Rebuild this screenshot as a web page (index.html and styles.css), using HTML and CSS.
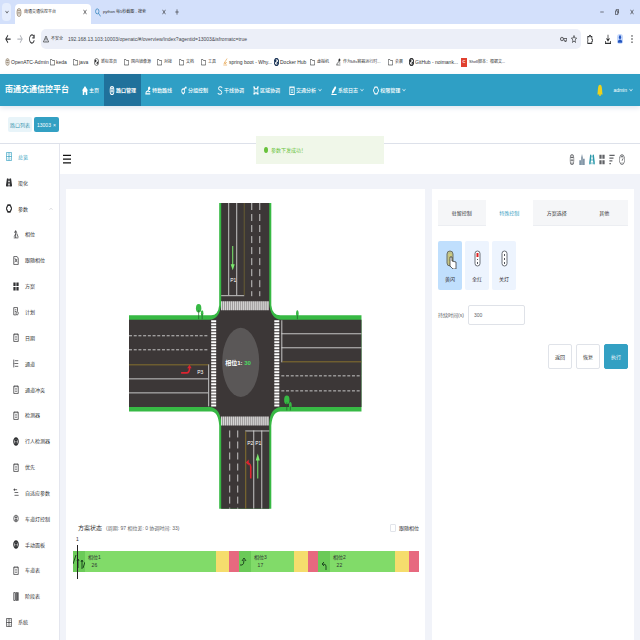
FILE: index.html
```html
<!DOCTYPE html>
<html lang="zh-CN">
<head>
<meta charset="utf-8">
<title>南通交通信控平台</title>
<link rel="stylesheet" href="styles.css">
</head>
<body>
<svg class="defs" aria-hidden="true">
  <symbol id="chev" viewBox="0 0 16 16" preserveAspectRatio="none"><path d="M2 5l6 6 6-6"/></symbol>
  <symbol id="close" viewBox="0 0 16 16" preserveAspectRatio="none"><path d="M2 2l12 12M14 2L2 14"/></symbol>
  <symbol id="plus" viewBox="0 0 16 16" preserveAspectRatio="none"><path d="M8 1v14M1 8h14"/></symbol>
  <symbol id="min" viewBox="0 0 16 16" preserveAspectRatio="none"><path d="M1 8h14"/></symbol>
  <symbol id="restore" viewBox="0 0 16 16" preserveAspectRatio="none"><path d="M2 5h9v10H2zM5 5V1h9v10h-3"/></symbol>
  <symbol id="search" viewBox="0 0 16 16" preserveAspectRatio="none"><circle cx="6" cy="6" r="4.5"/><path d="M9 9l6 6"/></symbol>
  <symbol id="back" viewBox="0 0 16 16" preserveAspectRatio="none"><path d="M15 8H2M8 2L2 8l6 6"/></symbol>
  <symbol id="fwd" viewBox="0 0 16 16" preserveAspectRatio="none"><path d="M1 8h13M8 2l6 6-6 6"/></symbol>
  <symbol id="reload" viewBox="0 0 16 16" preserveAspectRatio="none"><path d="M14 10a6.5 6.5 0 1 1-1-6M14 1v5H9"/></symbol>
  <symbol id="warn" viewBox="0 0 16 16" preserveAspectRatio="none"><path d="M8 2l7 12H1zM8 6v4M8 11v2"/></symbol>
  <symbol id="key" viewBox="0 0 16 16" preserveAspectRatio="none"><circle cx="4.500" cy="8" r="3.500"/><path d="M8 7h8v3h-2v3h-3v-3H8M4 8h1"/></symbol>
  <symbol id="star" viewBox="0 0 16 16" preserveAspectRatio="none"><path d="M8 1l2 5h5l-4 4 1 5-4-3-4 3 1-5-4-4h5z"/></symbol>
  <symbol id="puzzle" viewBox="0 0 16 16" preserveAspectRatio="none"><path d="M2 4h4a2 2 0 0 1 4 0h3v4a2 2 0 0 1 0 4v3H2v-4a2 2 0 0 0 0-3z"/></symbol>
  <symbol id="down" viewBox="0 0 16 16" preserveAspectRatio="none"><path d="M8 1v9M4 7l4 4 4-4M1 11v4h14v-4"/></symbol>
  <symbol id="dots" viewBox="0 0 16 16" preserveAspectRatio="none"><g class="solid"><circle cx="8" cy="3" r="1.500"/><circle cx="8" cy="8" r="1.500"/><circle cx="8" cy="13" r="1.500"/></g></symbol>
  <symbol id="folder" viewBox="0 0 16 16" preserveAspectRatio="none"><path d="M1 3h5l2 2h7v9H1z"/></symbol>
  <symbol id="globe" viewBox="0 0 16 16" preserveAspectRatio="none"><circle cx="8" cy="8" r="7"/><path class="solid" d="M3 3l5 1-1 4-4 1zM9 8l5-1-3 6-3-1z"/></symbol>
  <symbol id="light" viewBox="0 0 16 16" preserveAspectRatio="none"><rect x="3" y="1" width="10" height="14" rx="5"/><path d="M8 3v2M8 7v2M8 11v2M4 5h8M4 9h8"/></symbol>
  <symbol id="leaf" viewBox="0 0 16 16" preserveAspectRatio="none"><path d="M13 1L6 8l1 4 5-4M6 8l-3 4M1 14h12"/></symbol>
  <symbol id="home" viewBox="0 0 16 16" preserveAspectRatio="none"><path class="solid" d="M8 0l8 8h-2v8h-4v-5H6v5H2V8H0z"/></symbol>
  <symbol id="route" viewBox="0 0 16 16" preserveAspectRatio="none"><path d="M1 14h13M3 14c-3-6 10-4 6-9M9 10h5"/><circle class="solid" cx="11" cy="4" r="3"/></symbol>
  <symbol id="group" viewBox="0 0 16 16" preserveAspectRatio="none"><circle cx="6" cy="9" r="4"/><path d="M8 5l5-3M6 13v2"/><circle class="solid" cx="13" cy="3" r="2"/></symbol>
  <symbol id="sline" viewBox="0 0 16 16" preserveAspectRatio="none"><path d="M14 3C8-1 2 3 5 6c3 2 9 2 8 6-2 4-8 3-11 1"/></symbol>
  <symbol id="area" viewBox="0 0 16 16" preserveAspectRatio="none"><path d="M3 2l3 3h4l3-3v11h-3l-2-2-2 2H3zM1 2h4M11 2h4M1 14h5M10 14h5"/></symbol>
  <symbol id="doc" viewBox="0 0 16 16" preserveAspectRatio="none"><path d="M2 2h12v13H2zM5 1v3M11 1v3M5 7h6M5 11h6"/></symbol>
  <symbol id="pen" viewBox="0 0 16 16" preserveAspectRatio="none"><path class="solid" d="M11 0l3 3-7 9-5 2 1-5zM1 14h14v2H1z"/></symbol>
  <symbol id="gear" viewBox="0 0 16 16" preserveAspectRatio="none"><path d="M5 2h6l4 6-4 6H5L1 8z"/></symbol>
  <symbol id="overview" viewBox="0 0 16 16" preserveAspectRatio="none"><path d="M1 1h14v14H1zM8 1v14M1 8h14M4 4h1M11 4h1M4 12h1M11 12h1"/></symbol>
  <symbol id="road" viewBox="0 0 16 16" preserveAspectRatio="none"><path d="M4 1L1 15M12 1l3 14M5 1L4 15M11 1l1 14M8 2v3M8 7v3M8 12v3"/></symbol>
  <symbol id="phase" viewBox="0 0 16 16" preserveAspectRatio="none"><path d="M2 14h12M3 12l4-5M7 2v12M4 5l3-4 3 4M10 6l4 7"/></symbol>
  <symbol id="follow" viewBox="0 0 16 16" preserveAspectRatio="none"><path d="M2 1h9l3 3v11H2zM5 4l6 7M11 5l-6 6"/></symbol>
  <symbol id="four" viewBox="0 0 16 16" preserveAspectRatio="none"><path class="solid" d="M1 1h6v6H1zM9 1h6v6H9zM1 9h6v6H1zM9 9h6v6H9z"/></symbol>
  <symbol id="plan" viewBox="0 0 16 16" preserveAspectRatio="none"><path d="M9 14H2V1h10v6M5 5h4M5 8h3"/><circle cx="11" cy="11" r="3"/></symbol>
  <symbol id="chan" viewBox="0 0 16 16" preserveAspectRatio="none"><path d="M2 1v14M5 3h9M5 8h9M5 13h9M2 8h2"/></symbol>
  <symbol id="person" viewBox="0 0 16 16" preserveAspectRatio="none"><circle cx="8" cy="8" r="6"/><path d="M8 3v10M5 6h6M6 12l2-3 2 3"/></symbol>
  <symbol id="adapt" viewBox="0 0 16 16" preserveAspectRatio="none"><path d="M1 3h10M4 8h10M4 13h11M4 1v4"/></symbol>
  <symbol id="bars" viewBox="0 0 16 16" preserveAspectRatio="none"><path d="M2 1h4v14H2zM8 1h2v14H8zM12 1h2v14h-2z"/></symbol>
  <symbol id="sort" viewBox="0 0 16 16" preserveAspectRatio="none"><path d="M1 2h14M1 6h11M1 10h8M1 14h4"/></symbol>
  <symbol id="help" viewBox="0 0 16 16" preserveAspectRatio="none"><circle cx="8" cy="8" r="7"/><path d="M5 6c0-4 6-4 6 0 0 2-3 2-3 4M8 12v1"/></symbol>
  <symbol id="chart" viewBox="0 0 16 16" preserveAspectRatio="none"><path class="solid" d="M1 9h4v7H1zM6 5l2-5 2 5v11H6zM11 7h4v9h-4z"/></symbol>
  <symbol id="user" viewBox="0 0 16 16" preserveAspectRatio="none"><circle class="solid" cx="8" cy="5" r="3"/><path class="solid" d="M2 14c0-7 12-7 12 0z"/></symbol>
  <symbol id="bell" viewBox="0 0 16 16" preserveAspectRatio="none"><path class="solid" d="M1 14C3 10 1 1 8 1s5 9 7 13zM6 14h4v2H6z"/></symbol>
  <symbol id="burger" viewBox="0 0 16 16" preserveAspectRatio="none"><path d="M0 2h16M0 8h16M0 14h16"/></symbol>
</svg>

<header class="browser">
  <div class="tabstrip">
    <button class="tab-menu" aria-label="标签页"><svg class="i xs"><use href="#chev"/></svg></button>
    <div class="tab current"><svg class="i lamp"><use href="#light"/></svg><span>南通交通信控平台</span><svg class="i xs"><use href="#close"/></svg></div>
    <div class="tab"><svg class="i blue"><use href="#search"/></svg><span>python 每5秒截图 - 搜索</span><svg class="i xs"><use href="#close"/></svg></div>
    <button class="new-tab" aria-label="新标签页"><svg class="i xs"><use href="#plus"/></svg></button>
    <div class="win"><svg class="i xs"><use href="#min"/></svg><svg class="i xs"><use href="#restore"/></svg><svg class="i xs"><use href="#close"/></svg></div>
  </div>
  <div class="toolbar">
    <svg class="i"><use href="#back"/></svg><svg class="i pale"><use href="#fwd"/></svg><svg class="i"><use href="#reload"/></svg>
    <div class="address"><svg class="i"><use href="#warn"/></svg><span class="unsafe">不安全</span><span class="url">192.168.13.103:10003/openatc/#/overview/index?agentid=13003&amp;isfromatc=true</span><svg class="i wide"><use href="#key"/></svg><svg class="i"><use href="#star"/></svg></div>
    <svg class="i"><use href="#puzzle"/></svg><svg class="i dl"><use href="#down"/></svg><svg class="i avatar"><use href="#user"/></svg><svg class="i"><use href="#dots"/></svg>
  </div>
  <nav class="bookmarks" aria-label="书签">
    <a class="latin" href="#"><svg class="i lamp"><use href="#light"/></svg>OpenATC-Admin</a>
    <a class="latin" href="#"><svg class="i"><use href="#folder"/></svg>keda</a>
    <a class="latin" href="#"><svg class="i"><use href="#folder"/></svg>java</a>
    <a href="#"><svg class="i"><use href="#globe"/></svg>新标签页</a>
    <a href="#"><svg class="i"><use href="#folder"/></svg>国内镜像源</a>
    <a href="#"><svg class="i"><use href="#folder"/></svg>对接</a>
    <a href="#"><svg class="i"><use href="#folder"/></svg>文档</a>
    <a href="#"><svg class="i"><use href="#folder"/></svg>工具</a>
    <a class="latin" href="#"><svg class="i orange"><use href="#leaf"/></svg>spring boot - Why...</a>
    <a class="latin" href="#"><svg class="i navy"><use href="#globe"/></svg>Docker Hub</a>
    <a href="#"><svg class="i"><use href="#folder"/></svg>虚拟机</a>
    <a href="#"><svg class="i"><use href="#route"/></svg>作为k8s容器运行时...</a>
    <a href="#"><svg class="i"><use href="#folder"/></svg>会晨</a>
    <a class="latin" href="#"><svg class="i bold"><use href="#globe"/></svg>GitHub - noimank...</a>
    <a href="#"><span class="c-logo">C</span>Shell脚本：根据文...</a>
  </nav>
</header>

<nav class="topnav" aria-label="主导航">
  <h1>南通交通信控平台</h1>
  <a href="#"><svg class="i"><use href="#home"/></svg>主页</a>
  <a class="active" href="#"><svg class="i"><use href="#light"/></svg>路口管理</a>
  <a href="#"><svg class="i"><use href="#route"/></svg>特勤路线</a>
  <a href="#"><svg class="i"><use href="#group"/></svg>分组控制</a>
  <a href="#"><svg class="i"><use href="#sline"/></svg>干线协调</a>
  <a href="#"><svg class="i"><use href="#area"/></svg>区域协调</a>
  <a href="#"><svg class="i"><use href="#doc"/></svg>交通分析<svg class="i xs"><use href="#chev"/></svg></a>
  <a href="#"><svg class="i"><use href="#pen"/></svg>系统日志<svg class="i xs"><use href="#chev"/></svg></a>
  <a href="#"><svg class="i bold"><use href="#gear"/></svg>权限管理<svg class="i xs"><use href="#chev"/></svg></a>
  <svg class="i bell"><use href="#bell"/></svg>
  <button class="account">admin<svg class="i xs"><use href="#chev"/></svg></button>
</nav>

<div class="crumbs"><a class="crumb" href="#">路口列表</a><a class="crumb on" href="#">13003 <span>×</span></a></div>
<div class="toast" role="status"><i></i>参数下发成功！</div>

<div class="shell">
  <nav class="side" aria-label="侧边栏">
    <a class="active" href="#"><svg class="i"><use href="#overview"/></svg>总览</a>
    <a href="#"><svg class="i bold"><use href="#road"/></svg>渠化</a>
    <a href="#"><svg class="i bold"><use href="#gear"/></svg>参数<svg class="i fold"><use href="#chev"/></svg></a>
    <a class="sub" href="#"><svg class="i"><use href="#phase"/></svg>相位</a>
    <a class="sub" href="#"><svg class="i"><use href="#follow"/></svg>跟随相位</a>
    <a class="sub" href="#"><svg class="i"><use href="#four"/></svg>方案</a>
    <a class="sub" href="#"><svg class="i"><use href="#plan"/></svg>计划</a>
    <a class="sub" href="#"><svg class="i"><use href="#doc"/></svg>日期</a>
    <a class="sub" href="#"><svg class="i"><use href="#chan"/></svg>通道</a>
    <a class="sub" href="#"><svg class="i"><use href="#doc"/></svg>通道冲突</a>
    <a class="sub" href="#"><svg class="i"><use href="#doc"/></svg>检测器</a>
    <a class="sub" href="#"><svg class="i bold"><use href="#person"/></svg>行人检测器</a>
    <a class="sub" href="#"><svg class="i"><use href="#doc"/></svg>优先</a>
    <a class="sub" href="#"><svg class="i"><use href="#adapt"/></svg>自适应参数</a>
    <a class="sub" href="#"><svg class="i"><use href="#person"/></svg>车道灯控制</a>
    <a class="sub" href="#"><svg class="i bold"><use href="#person"/></svg>手动面板</a>
    <a class="sub" href="#"><svg class="i"><use href="#doc"/></svg>车道表</a>
    <a class="sub" href="#"><svg class="i"><use href="#bars"/></svg>阶段表</a>
    <a href="#"><svg class="i"><use href="#overview"/></svg>系统</a>
  </nav>

  <main>
    <div class="pagebar">
      <button aria-label="折叠菜单"><svg class="i burger"><use href="#burger"/></svg></button>
      <div class="tools">
        <svg class="i"><use href="#light"/></svg><svg class="i slate"><use href="#chart"/></svg><svg class="i teal"><use href="#road"/></svg><svg class="i"><use href="#four"/></svg><svg class="i"><use href="#sort"/></svg><svg class="i"><use href="#help"/></svg>
      </div>
    </div>
    <div class="panels">
      <section class="card map">
        <svg class="cross" viewBox="130 203 232 305" role="img" aria-label="路口">
          <path fill="#37b944" d="M220 203H272V305Q273 315 281 315H362V411H281Q273 411 272 425V508H220V425Q219 411 212 411H130V315H212Q219 315 220 305Z"/>
          <path fill="#3c3737" d="M222 203H270V303Q271 319 282 319.500H362V406.500H282Q271 407 270 422V508H222V422Q221 407 210 406.500H130V319.500H210Q221 319 222 303Z"/>
          <g fill="none" stroke="#fff">
            <path stroke-width="9" stroke-dasharray="1.300 .700" d="M222 305.500H270M222 420.500H270"/>
            <path stroke-width="5" stroke-dasharray="2 1" d="M214.500 320V406M277.500 320V406"/>
          </g>
          <g fill="none" stroke="#d6d6d6" stroke-width=".900">
            <path d="M229.500 203V295M237.500 203V295M222 295.500H245M130 378.500H209M130 392.500H209M209.500 364V406M282.500 320V362M282 333.500H362M282 347.500H362M246 430.500H270M254.500 430V508M262.500 430V508"/>
            <path stroke-dasharray="7 4" d="M252.500 203V296M260.500 203V296M230.500 430V508M238.500 430V508"/>
            <path stroke-dasharray="3 1.700" d="M130 335.500H209M130 349.500H209M282 375.500H362M282 390.500H362"/>
          </g>
          <path fill="none" stroke="#9a7f2c" stroke-width=".800" d="M130 364.500H209M283 361.500H362M246.500 431V508"/>
          <path fill="none" stroke="#665c33" d="M245 203V295"/>
          <ellipse cx="241.500" cy="362" rx="18.500" ry="34.500" fill="#5a5757"/>
          <g stroke="#7bea6e" fill="#7bea6e"><path d="M233.500 246V265M258.500 478V459"/><path stroke="none" d="M231.500 264h4l-2 6zM256.500 460h4l-2-7z"/></g>
          <g stroke="#dc2430" stroke-width="1.600" fill="none"><path d="M182 372.500H187Q190.500 373 190.500 367M251.500 478V469Q252 463 248.500 462.500"/></g>
          <path fill="#dc2430" d="M188 368l2.500-3.500 2 3.500zM249.500 459v6l-3-3z"/>
          <g fill="#37b944"><ellipse cx="199.500" cy="308" rx="2.700" ry="4.300"/><ellipse cx="203" cy="313" rx="1.300" ry="3"/><ellipse cx="298" cy="313.500" rx="1.300" ry="3.500"/><ellipse cx="287.500" cy="399.500" rx="2.700" ry="4.300"/><ellipse cx="291" cy="405" rx="1.400" ry="3.500"/></g>
          <path stroke="#235c2b" stroke-width=".700" d="M199.500 310V319M203 314V319M298 315V319M287.500 402V410M291 406V410"/>
          <g class="lane"><text x="231" y="282">P1</text><text x="198" y="374">P3</text><text x="248" y="445">P2</text><text x="256" y="445">P1</text></g>
          <text class="now" x="226" y="365">相位1: <tspan>30</tspan></text>
        </svg>

        <div class="status">
          <h2>方案状态</h2><span>(周期: 97 相位差: 0 协调时间: 33)</span>
          <label><input type="checkbox">跟随相位</label>
        </div>
        <div class="timeline">
          <div class="seg g w143"><b><svg viewBox="0 0 12 20"><path d="M0 13L3 4M5 17V8M4 10l1-2 1 2M9 18V9M8 11l1-2 1 2M10 17l2-6"/></svg></b><span>相位1<br>26</span></div>
          <div class="seg y w13"></div><div class="seg r w10"></div>
          <div class="seg g w55"><b><svg viewBox="0 0 12 20"><path d="M1 14h2q2 0 2-5M3 10l2-3 2 3"/></svg></b><span>相位3<br>17</span></div>
          <div class="seg y w14"></div><div class="seg r w10"></div>
          <div class="seg g w77"><b><svg viewBox="0 0 12 20"><path d="M8 19v-4q0-2-3-2M6 11l-2 2 2 2"/></svg></b><span>相位2<br>22</span></div>
          <div class="seg y w14"></div><div class="seg r w10"></div>
          <div class="cursor"><span>1</span></div>
        </div>
      </section>

      <section class="card control">
        <div class="tabs" role="tablist">
          <button role="tab">驻留控制</button><button role="tab" class="active" aria-selected="true">特殊控制</button><button role="tab">方案选择</button><button role="tab">其他</button>
        </div>
        <div class="modes">
          <button class="active"><svg viewBox="0 0 14 20"><rect x="4" y="2" width="6" height="15" rx="3" fill="#bfc18a" stroke="#6b7068"/><path d="M5.500 6h3M5.500 9h3M5.500 13h3" stroke="#e3d868"/><path d="M7 8v9l3 3h3v-7l-4-1V8z" fill="#fff" stroke="#222" stroke-width=".700"/></svg>黄闪</button>
          <button><svg viewBox="0 0 14 20"><rect x="5" y="2" width="5" height="15" rx="2.500" fill="#fff" stroke="#6a6e76"/><path d="M7.500 4v4" stroke="#e02020" stroke-width="2"/><path d="M7.500 10v1M7.500 13v2" stroke="#50545c"/></svg>全红</button>
          <button><svg viewBox="0 0 14 20"><rect x="5" y="2" width="5" height="15" rx="2.500" fill="#fff" stroke="#6a6e76"/><path d="M7.500 5v2M7.500 9v2M7.500 13v2" stroke="#50545c"/></svg>关灯</button>
        </div>
        <div class="field"><label for="dur">持续时间(s)</label><input id="dur" type="text" value="300"></div>
        <div class="actions"><button>返回</button><button>恢复</button><button class="primary">执行</button></div>
      </section>
    </div>
  </main>
</div>
</body>
</html>
```
FILE: styles.css
```css
* { box-sizing: border-box; }
body {
  margin: 0;
  min-height: 100vh;
  display: flex;
  flex-direction: column;
  position: relative;
  font: 5px/8px "Liberation Sans", "Noto Sans CJK SC", sans-serif;
  color: #303133;
  background: #fff;
}
button, input { font: inherit; color: inherit; margin: 0; }
button { border: 0; padding: 0; background: none; }
a { color: inherit; text-decoration: none; white-space: nowrap; }
h1, h2 { margin: 0; }
.defs { position: absolute; width: 0; height: 0; }
.i { width: 6px; height: 9px; flex: none; fill: none; stroke: currentColor; stroke-width: 1.5; }
.i.xs { width: 4px; height: 6px; stroke-width: 2; }
.i.bold { stroke-width: 3; }
.solid { fill: currentColor; stroke: none; }
.lamp { color: #7d6a50; }
.blue { color: #2a7fb8; }
.pale { color: #b5b8be; }
.orange { color: #e59a3c; }
.navy { color: #1c3557; stroke-width: 3; }

.tabstrip { height: 24px; display: flex; align-items: center; background: #d3e0fb; }
.tab-menu { width: 9px; height: 18px; margin: 0 4px 0 2px; border-radius: 4px; background: #e6eefd; display: grid; place-items: center; }
.tab { width: 80px; height: 20px; padding: 0 5px 0 4px; display: flex; align-items: center; gap: 2px; font-size: 4px; white-space: nowrap; }
.tab span { flex: 1; }
.tab.current { width: 76px; align-self: flex-end; background: #fff; border-radius: 4px 4px 0 0; padding: 0 4px 4px 1px; }
.new-tab { margin-left: 4px; display: grid; }
.win { margin-left: auto; padding-right: 6px; display: flex; gap: 11px; }
.toolbar { height: 30px; padding: 0 5px; display: flex; align-items: center; gap: 6px; }
.toolbar .i { height: 10px; stroke-width: 2; }
.toolbar .address .i { height: 8px; stroke-width: 1.5; }
.address { flex: 1; height: 20px; padding: 0 4px 0 2px; display: flex; align-items: center; gap: 2px; border-radius: 5px; background: #eceff8; }
.unsafe { font-size: 4px; }
.url { flex: 1; padding-left: 3px; color: #44474d; }
.address .wide { width: 7px; margin-right: 2px; }
.dl { margin-left: 6px; }
.avatar { color: #2456c0; background: #c5d8fb; border-radius: 3px; }
.bookmarks { height: 20px; padding: 0 5px 4px; display: grid; grid-template-columns: 45px 23px 21px 30px 33px 22px 22px 22px 51px 36px 26px 52px 21px 52px auto; align-items: center; font-size: 4px; }
.bookmarks a { display: flex; align-items: center; gap: 2px; }
.bookmarks .i { width: 5px; height: 8px; }
.bookmarks .latin { font-size: 5px; gap: 1px; }
.c-logo { width: 6px; height: 9px; background: #e0402f; color: #fff; text-align: center; font-weight: bold; }

.topnav { height: 32px; padding: 0 7px 0 5px; display: flex; align-items: center; color: #fff; background: #2f9fc5; box-shadow: 0 2px 5px #dfe6ef; }
.topnav h1 { font-size: 8px; line-height: 12px; margin-right: 9px; }
.topnav a { align-self: stretch; padding: 0 5px 0 4px; display: flex; align-items: center; gap: 1px; font-weight: 500; }
.topnav .i { stroke-width: 2; }
.topnav a.active { background: #20719b; font-weight: bold; padding: 0 5px; }
.topnav a .xs { margin-left: 1px; }
.topnav .bell { margin-left: auto; height: 12px; color: #ecd21d; }
.account { margin-left: 10px; display: flex; align-items: center; gap: 2px; }

.crumbs { height: 38px; padding: 0 8px; display: flex; align-items: center; gap: 2px; border-bottom: 1px solid #dde1ea; }
.crumb { height: 15px; padding: 0 2px; display: flex; align-items: center; gap: 2px; border-radius: 2px; color: #3b96b0; background: #e8f4f9; }
.crumb.on { padding: 0 3px; color: #fff; background: #33a0c3; }
.toast { position: absolute; left: 40%; top: 136px; width: 20%; height: 28px; padding-left: 8px; display: flex; align-items: center; gap: 3px; color: #67c23a; background: #f0f7e9; }
.toast i { width: 4px; height: 6px; border-radius: 50%; background: #67c23a; }

.shell { flex: 1; display: flex; }
.side { width: 60px; padding-bottom: 5px; display: flex; flex-direction: column; border-right: 1px solid #e4e6ee; }
.side a { flex: 1; padding: 0 6px; display: flex; align-items: center; gap: 6px; }
.side a.sub { padding-left: 13px; }
.side .active { color: #35a0c0; }
.side .fold { width: 4px; height: 4px; margin-left: auto; color: #9a9da3; transform: rotate(180deg); }
main { flex: 1; display: flex; flex-direction: column; min-width: 0; }
.pagebar { height: 30px; padding: 0 15px 0 3px; display: flex; align-items: center; justify-content: space-between; }
.pagebar button { display: grid; }
.burger { width: 8px; height: 10px; color: #111; stroke-width: 2; }
.tools { display: flex; gap: 4px; color: #606266; }
.tools .i { height: 11px; }
.tools .slate { color: #71879a; }
.tools .teal { color: #2b98ab; stroke-width: 2; }
.panels { flex: 1; padding: 15px 6px 0; display: grid; grid-template-columns: minmax(0, 359fr) minmax(0, 202fr); gap: 7px; background: #f1f3f9; }
.card { background: #fff; padding: 0 6px; }
.map { padding-top: 14px; }
.cross { display: block; width: 67%; margin: 0 auto; font-family: "Liberation Sans", "Noto Sans CJK SC", sans-serif; }
.lane { font-size: 5px; fill: #fff; }
.now { font-size: 6px; font-weight: bold; fill: #fff; }
.now tspan { fill: #4ddb61; }
.status { margin: 12px 0 0; padding: 0 0 0 6px; display: flex; align-items: center; gap: 4px; height: 14px; white-space: nowrap; }
.status h2 { font-size: 6px; font-weight: 400; }
.status span { color: #606266; }
.status label { margin-left: auto; display: flex; align-items: center; gap: 3px; }
.status input { appearance: none; width: 6px; height: 8px; border: 1px solid #e1e4ea; border-radius: 1px; background: #fff; }
.timeline { margin: 16px 0 0; padding-left: 1px; height: 21px; display: flex; position: relative; }
.seg { display: flex; min-width: 0; }
.g { background: #81db69; }
.y { background: #f5dd6d; }
.r { background: #e7697f; }
.seg b { width: 12px; background: #6bca58; }
.seg svg { display: block; width: 12px; height: 20px; fill: none; stroke: #1e4820; stroke-width: 1; }
.seg span { padding: 2px 0 0 3px; text-align: center; }
.w143 { flex: 143; } .w13 { flex: 13; } .w10 { flex: 10; } .w55 { flex: 55; }
.w14 { flex: 14; } .w77 { flex: 77; }
.cursor { position: absolute; left: 5px; top: -6px; height: 34px; border-left: 1px solid #222; }
.cursor span { position: absolute; left: -2px; top: -10px; }

.control { padding-top: 11px; }
.tabs { height: 26px; display: flex; background: #f5f6f8; border-bottom: 1px solid #eceef2; }
.tabs button { flex: 1; }
.tabs .active { height: 26px; background: #fff; color: #35a0c3; }
.modes { margin-top: 15px; display: flex; gap: 3px; }
.modes button { width: 24px; height: 49px; border-radius: 2px; background: #edf4fe; display: flex; flex-direction: column; align-items: center; justify-content: center; gap: 6px; }
.modes .active { background: #c0dffd; }
.modes svg { width: 14px; height: 20px; fill: none; }
.field { margin-top: 15px; display: flex; align-items: center; gap: 5px; color: #606266; white-space: nowrap; }
.field label { flex: none; width: 25px; }
.field input { width: 57px; height: 20px; padding: 0 5px; border: 1px solid #dfe2e8; border-radius: 2px; background: #fff; }
.actions { margin-top: 19px; display: flex; justify-content: flex-end; gap: 4px; }
.actions button { width: 24px; height: 25px; border: 1px solid #e0e3e9; border-radius: 2px; }
.actions .primary { color: #fff; background: #33a0c3; border-color: #33a0c3; }
```
